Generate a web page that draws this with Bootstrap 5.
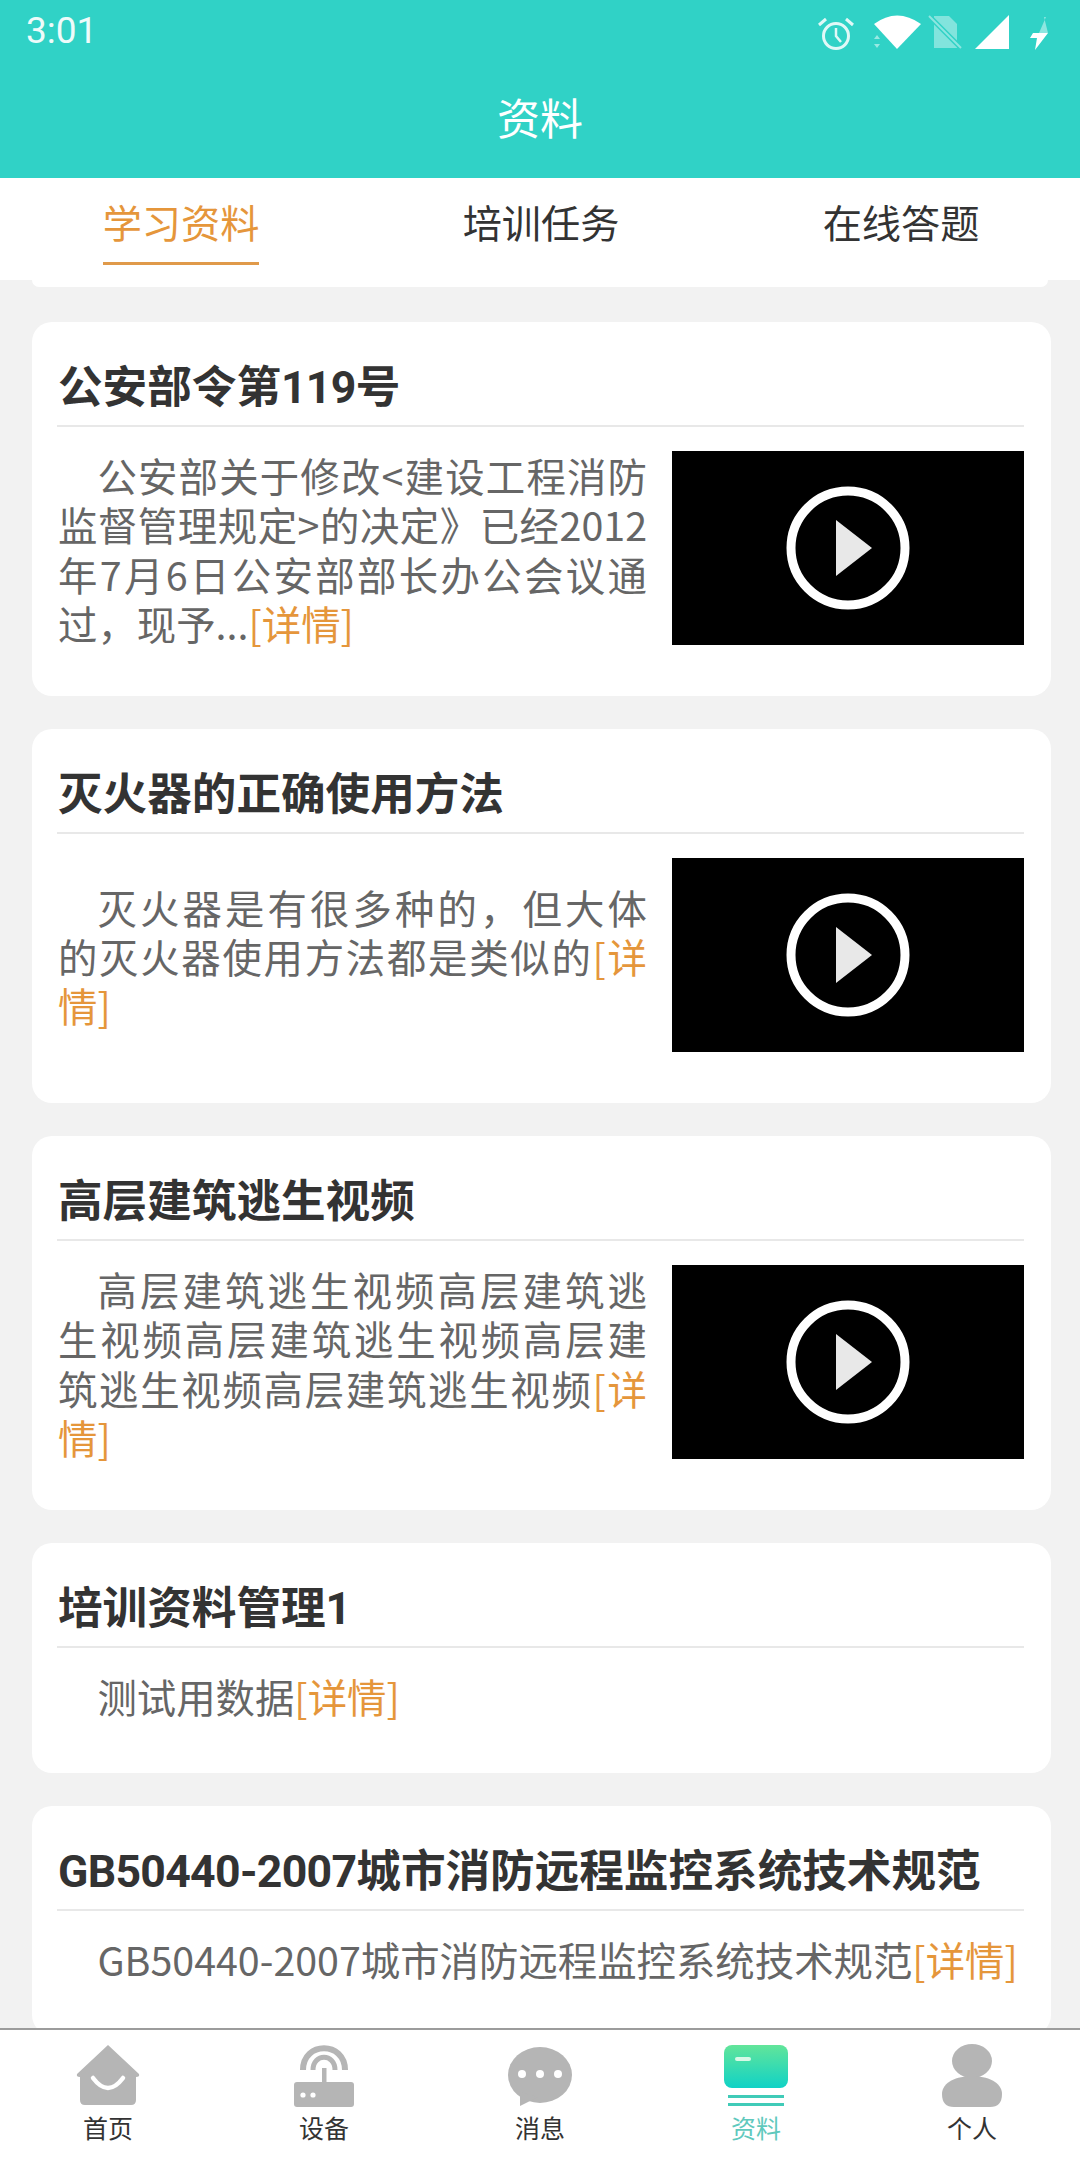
<!DOCTYPE html>
<html lang="zh">
<head>
<meta charset="utf-8">
<title>资料</title>
<link href="https://cdn.jsdelivr.net/npm/bootstrap@5.3.0/dist/css/bootstrap.min.css" rel="stylesheet">
<style>
html,body{margin:0;height:2160px;overflow:hidden}
body{font-family:"Noto Sans CJK SC","Liberation Sans",sans-serif;background:#f2f2f2}
.app-shell{height:2160px;width:1080px}
.app-head{height:178px;background:#30d2c6;color:#fff}
.status-row{height:62px;padding:0 31px 0 26px}
.clock{font-family:Roboto,sans-serif;font-size:37px;line-height:1;opacity:.92;margin-top:-1px}
.head-title{font-size:43px;line-height:1;margin-top:33px}
.tab-strip{height:102px;background:#fff;padding-top:15px;padding-left:1px}
.tab-cell{width:360px;flex:none}
.tab-label{display:inline-block;font-size:39.2px;line-height:56px;height:72px;color:#333;border-bottom:3px solid transparent}
.tab-label.is-on{color:#e5963b;border-bottom-color:#e09a4a}
.scroll-zone{min-height:0;overflow:hidden}
.prev-tail{height:7px;margin:0 32px 35px;background:#fff;border-radius:0 0 16px 16px}
.info-card{margin:0 29px 33px 32px;border:0;border-radius:20px;padding:0 27px 0 25px;background:#fff}
.info-title{font-family:Roboto,"Noto Sans CJK SC",sans-serif;font-size:44.6px;font-weight:700;color:#333;line-height:60px;margin:0;padding:36px 0 7px 1px;border-bottom:2px solid #e8e8e8;white-space:nowrap}
.latin-tight{letter-spacing:-.7px}
.info-body{padding-top:24px;padding-bottom:49px}
.info-text{font-size:39.4px;line-height:49.3px;color:#666;margin:-1px 0 3px;text-indent:1em;text-align:justify;padding-left:1px}
.info-text.has-thumb{width:590px;margin-bottom:0}
.info-text a{color:#e5963b;text-decoration:none}
.thumb{width:352px;height:194px;background:#000;flex:none;margin-bottom:2px}
.bottom-bar{height:132px;background:#fff;border-top:2px solid #9c9c9c;padding-top:14px}
.bottom-cell{width:216px;color:#333;font-size:25px;line-height:28px}
.bottom-cell svg{display:block;margin:0 auto 5px}
.bottom-cell.is-on{color:#5fc9bd}
</style>
</head>
<body>
<div class="app-shell d-flex flex-column">
  <header class="app-head text-center flex-shrink-0">
    <div class="status-row d-flex align-items-center justify-content-between">
      <span class="clock">3:01</span>
      <svg width="240" height="44" viewBox="810 8 240 44" aria-hidden="true">
        <g fill="none" stroke="#fff" stroke-opacity=".85">
          <circle cx="837" cy="35" r="12.5" stroke-width="3"/>
          <path d="M837 27v8l5 6" stroke-width="2.5"/>
          <path d="M820 24l7-6M854 24l-7-6" stroke-width="3"/>
        </g>
        <path d="M875 23Q898 6 922 23L898 48Z" fill="#fff"/>
        <path d="M878 34l3 4h-6zM878 47l3-4h-6z" fill="#fff" fill-opacity=".5"/>
        <path d="M935 15h15l8 8v24h-23z" fill="#fff" fill-opacity=".4"/>
        <path d="M930 15l32 32" stroke="#30d2c6" stroke-width="5"/>
        <path d="M930 15l32 32" stroke="#fff" stroke-opacity=".45" stroke-width="2"/>
        <path d="M1010 14v34h-34z" fill="#fff"/>
        <path d="M1047 16l-7 16h9l-4-16z" fill="#fff" fill-opacity=".45"/>
        <path d="M1049 32l-13 17 2-12h-7l3-5z" fill="#fff"/>
      </svg>
    </div>
    <div class="head-title">资料</div>
  </header>

  <nav class="tab-strip nav flex-nowrap flex-shrink-0 text-center">
    <div class="tab-cell"><span class="tab-label is-on">学习资料</span></div>
    <div class="tab-cell"><span class="tab-label">培训任务</span></div>
    <div class="tab-cell"><span class="tab-label">在线答题</span></div>
  </nav>

  <main class="scroll-zone flex-grow-1">
    <div class="prev-tail"></div>

    <section class="card info-card">
      <h2 class="info-title">公安部令第<span class="latin-tight">119</span>号</h2>
      <div class="info-body d-flex justify-content-between align-items-center">
        <p class="info-text has-thumb">公安部关于修改&lt;建设工程消防监督管理规定&gt;的决定》已经2012年7月6日公安部部长办公会议通过，现予...<a href="#">[详情]</a></p>
        <div class="thumb d-flex align-items-center justify-content-center">
          <svg width="126" height="126" viewBox="0 0 126 126" aria-hidden="true"><circle cx="63" cy="63" r="57" fill="none" stroke="#fff" stroke-width="9"/><path d="M51 35v56l36-28z" fill="#e8e8e8"/></svg>
        </div>
      </div>
    </section>

    <section class="card info-card">
      <h2 class="info-title">灭火器的正确使用方法</h2>
      <div class="info-body d-flex justify-content-between align-items-center">
        <p class="info-text has-thumb">灭火器是有很多种的，但大体的灭火器使用方法都是类似的<a href="#">[详情]</a></p>
        <div class="thumb d-flex align-items-center justify-content-center">
          <svg width="126" height="126" viewBox="0 0 126 126" aria-hidden="true"><circle cx="63" cy="63" r="57" fill="none" stroke="#fff" stroke-width="9"/><path d="M51 35v56l36-28z" fill="#e8e8e8"/></svg>
        </div>
      </div>
    </section>

    <section class="card info-card">
      <h2 class="info-title">高层建筑逃生视频</h2>
      <div class="info-body d-flex justify-content-between align-items-center">
        <p class="info-text has-thumb">高层建筑逃生视频高层建筑逃生视频高层建筑逃生视频高层建筑逃生视频高层建筑逃生视频<a href="#">[详情]</a></p>
        <div class="thumb d-flex align-items-center justify-content-center">
          <svg width="126" height="126" viewBox="0 0 126 126" aria-hidden="true"><circle cx="63" cy="63" r="57" fill="none" stroke="#fff" stroke-width="9"/><path d="M51 35v56l36-28z" fill="#e8e8e8"/></svg>
        </div>
      </div>
    </section>

    <section class="card info-card">
      <h2 class="info-title">培训资料管理1</h2>
      <div class="info-body">
        <p class="info-text">测试用数据<a href="#">[详情]</a></p>
      </div>
    </section>

    <section class="card info-card">
      <h2 class="info-title"><span class="latin-tight">GB50440-2007</span>城市消防远程监控系统技术规范</h2>
      <div class="info-body">
        <p class="info-text">GB50440-2007城市消防远程监控系统技术规范<a href="#">[详情]</a></p>
      </div>
    </section>
  </main>

  <footer class="bottom-bar d-flex flex-shrink-0 text-center">
    <div class="bottom-cell">
      <svg width="64" height="64" viewBox="0 0 64 64" aria-hidden="true">
        <path d="M32 1 63 30Q64 33 60 33V56Q60 61 55 61H9Q4 61 4 56V33Q0 33 1 30Z" fill="#b5b5b5"/>
        <path d="M17 34Q32 54 47 34" fill="none" stroke="#fff" stroke-width="4.5" stroke-linecap="round"/>
      </svg>
      首页
    </div>
    <div class="bottom-cell">
      <svg width="64" height="64" viewBox="0 0 64 64" aria-hidden="true">
        <g fill="none" stroke="#b5b5b5">
          <path d="M11 26C11 -3 53 -3 53 26" stroke-width="6"/>
          <path d="M21 26C21 9 43 9 43 26" stroke-width="5"/>
        </g>
        <rect x="30" y="24" width="4.5" height="16" fill="#b5b5b5"/>
        <rect x="2" y="38" width="60" height="25" rx="3" fill="#b5b5b5"/>
        <circle cx="11" cy="51" r="2.6" fill="#fff"/>
        <circle cx="21" cy="51" r="2.6" fill="#fff"/>
      </svg>
      设备
    </div>
    <div class="bottom-cell">
      <svg width="64" height="64" viewBox="0 0 64 64" aria-hidden="true">
        <ellipse cx="32" cy="31" rx="32" ry="28" fill="#b5b5b5"/>
        <path d="M12 48V62L30 53Z" fill="#b5b5b5"/>
        <circle cx="14" cy="30" r="4" fill="#fff"/>
        <circle cx="32" cy="30" r="4" fill="#fff"/>
        <circle cx="50" cy="30" r="4" fill="#fff"/>
      </svg>
      消息
    </div>
    <div class="bottom-cell is-on">
      <svg width="64" height="64" viewBox="0 0 64 64" aria-hidden="true">
        <defs><linearGradient id="cardFill" x1="0" y1="0" x2="0" y2="1"><stop offset="0" stop-color="#62e59a"/><stop offset="1" stop-color="#10d2c6"/></linearGradient></defs>
        <rect x="0" y="1" width="64" height="43" rx="8" fill="url(#cardFill)"/>
        <rect x="11" y="13" width="16" height="4" rx="2" fill="#d8f8e6"/>
        <rect x="4" y="51" width="56" height="3" fill="#40cbb8"/>
        <rect x="4" y="59" width="56" height="3" fill="#40cbb8"/>
      </svg>
      资料
    </div>
    <div class="bottom-cell">
      <svg width="64" height="64" viewBox="0 0 64 64" aria-hidden="true">
        <ellipse cx="32" cy="17" rx="20" ry="17" fill="#b5b5b5"/>
        <path d="M2 50C2 26 62 26 62 50Q62 63 50 63H14Q2 63 2 50Z" fill="#b5b5b5"/>
      </svg>
      个人
    </div>
  </footer>
</div>
<script src="https://cdn.jsdelivr.net/npm/bootstrap@5.3.0/dist/js/bootstrap.bundle.min.js"></script>
</body>
</html>
